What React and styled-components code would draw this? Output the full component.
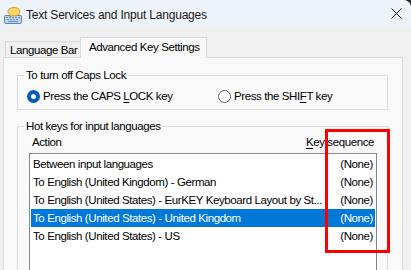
import styled, { createGlobalStyle } from "styled-components"

const GlobalStyle = createGlobalStyle`
  html, body {
    margin: 0;
    background: #2b2b2b;
  }
  body {
    font-family: "Liberation Sans", Arial, sans-serif;
    font-size: 11.5px;
    letter-spacing: -0.4px;
    color: #000;
  }
  * { box-sizing: border-box; }
`

const rows = [
    { action: "Between input languages", keys: "(None)" },
    { action: "To English (United Kingdom) - German", keys: "(None)" },
    { action: "To English (United States) - EurKEY Keyboard Layout by St...", keys: "(None)" },
    { action: "To English (United States) - United Kingdom", keys: "(None)", selected: true },
    { action: "To English (United States) - US", keys: "(None)" },
]

const AppIcon = () => (
    <svg width="18" height="18" viewBox="0 0 18 18">
        <rect x="0.5" y="9.5" width="17" height="8" rx="1" fill="#b9d4ee" stroke="#5d83b0" />
        <g fill="#6f8fb8">
            <rect x="2" y="11" width="2" height="1" />
            <rect x="5" y="11" width="2" height="1" />
            <rect x="8" y="11" width="2" height="1" />
            <rect x="11" y="11" width="2" height="1" />
            <rect x="14" y="11" width="2" height="1" />
            <rect x="3" y="13" width="2" height="1" />
            <rect x="6" y="13" width="2" height="1" />
            <rect x="9" y="13" width="2" height="1" />
            <rect x="12" y="13" width="2" height="1" />
            <rect x="4" y="15" width="10" height="1" />
        </g>
        <path d="M10 1.5c3.3 0 6 1.8 6 4.2s-2.7 4.2-6 4.2c-0.6 0-1.2 0-1.7-0.2L5.5 11l0.9-2.3C5 8 4 6.9 4 5.7 4 3.3 6.7 1.5 10 1.5z" fill="#fad66a" stroke="#d89a2a" />
    </svg>
)

const CloseIcon = () => (
    <svg width="11" height="11" viewBox="0 0 11 11">
        <path d="M0.5 0.5L10.5 10.5M10.5 0.5L0.5 10.5" stroke="#1b1b1b" strokeWidth="1" />
    </svg>
)

const App = () => {
    return (
        <>
            <GlobalStyle />
            <Window>
                <TitleBar>
                    <AppIcon />
                    <Title>Text Services and Input Languages</Title>
                    <CloseButton><CloseIcon /></CloseButton>
                </TitleBar>
                <TabStrip>
                    <Tab>Language Bar</Tab>
                    <Tab $active>Advanced Key Settings</Tab>
                </TabStrip>
                <Panel>
                    <GroupBox>
                        <Legend>To turn off Caps Lock</Legend>
                        <RadioRow>
                            <RadioItem>
                                <Radio $checked />
                                <span>Press the CAPS <Mnemonic>L</Mnemonic>OCK key</span>
                            </RadioItem>
                            <RadioItem>
                                <Radio />
                                <span>Press the SHI<Mnemonic>F</Mnemonic>T key</span>
                            </RadioItem>
                        </RadioRow>
                    </GroupBox>
                    <GroupBox $grow>
                        <Legend>Hot keys for input languages</Legend>
                        <ColumnHeader>
                            <span>Action</span>
                            <span><Mnemonic>K</Mnemonic>ey sequence</span>
                        </ColumnHeader>
                        <ListBox>
                            {rows.map((row) => (
                                <ListRow key={row.action} $selected={row.selected}>
                                    <ActionText>{row.action}</ActionText>
                                    <span>{row.keys}</span>
                                </ListRow>
                            ))}
                        </ListBox>
                    </GroupBox>
                </Panel>
                <Highlight />
            </Window>
        </>
    )
}

export default App

const Window = styled.div`
    position: relative;
    width: 411px;
    height: 270px;
    display: flex;
    flex-direction: column;
    background: #f0f0f0;
    border-top-right-radius: 8px;
    overflow: hidden;
`

const TitleBar = styled.div`
    height: 28px;
    flex: none;
    display: flex;
    align-items: center;
    padding: 2px 9px 0 4px;
    background: #eef3f9;
`

const Title = styled.div`
    margin-left: 4px;
    flex: 1;
    font-size: 12px;
    letter-spacing: -0.2px;
    color: #1a1a1a;
`

const CloseButton = styled.div`
    display: flex;
    margin-top: -3px;
`

const TabStrip = styled.div`
    flex: none;
    display: flex;
    align-items: flex-end;
    padding: 9px 0 0 5px;
    position: relative;
    z-index: 1;
`

const Tab = styled.div`
    height: ${(p) => (p.$active ? "21px" : "16px")};
    width: ${(p) => (p.$active ? "127px" : "76px")};
    margin-bottom: ${(p) => (p.$active ? "-1px" : "0")};
    margin-left: ${(p) => (p.$active ? "-1px" : "0")};
    padding: ${(p) => (p.$active ? "2px 0 0 8px" : "1px 0 0 4px")};
    border: 1px solid #d9d9d9;
    border-bottom: none;
    background: ${(p) => (p.$active ? "#f9f9f9" : "#f0f0f0")};
    white-space: nowrap;
    line-height: 15px;
`

const Panel = styled.div`
    flex: 1;
    display: flex;
    flex-direction: column;
    margin-left: 3px;
    width: 400px;
    padding: 9px 14px 0 13px;
    border: 1px solid #d9d9d9;
    background: #f9f9f9;
`

const GroupBox = styled.fieldset`
    margin: 0 0 8px 0;
    padding: 0 0 5px 0;
    border: 1px solid #dcdcdc;
    min-width: 0;
    ${(p) => p.$grow && "flex: 1; margin-bottom: 0;"}
`

const Legend = styled.legend`
    margin-left: 6px;
    padding: 0 2px;
    line-height: 16px;
`

const RadioRow = styled.div`
    display: grid;
    grid-template-columns: 191px 1fr;
    margin-top: 5px;
    padding-left: 9px;
    height: 16px;
`

const RadioItem = styled.div`
    display: flex;
    align-items: center;
    gap: 3px;
    white-space: nowrap;
`

const Radio = styled.span`
    width: 13px;
    height: 13px;
    border-radius: 50%;
    flex: none;
    background: #fff;
    border: ${(p) => (p.$checked ? "4px solid #005fb8" : "1px solid #5f5f5f")};
`

const Mnemonic = styled.span`
    text-decoration: underline;
    text-underline-offset: 2px;
`

const ColumnHeader = styled.div`
    display: flex;
    justify-content: space-between;
    height: 16px;
    line-height: 16px;
    padding: 0 13px 0 14px;
`

const ListBox = styled.div`
    margin: 3px 10px 0 11px;
    height: 130px;
    padding: 1px;
    border: 1px solid #828790;
    background: #fff;
`

const ListRow = styled.div`
    height: 18px;
    line-height: 18px;
    display: flex;
    justify-content: space-between;
    padding: 0 2px;
    background: ${(p) => (p.$selected ? "#0078d7" : "transparent")};
    color: ${(p) => (p.$selected ? "#fff" : "#000")};
`

const ActionText = styled.span`
    white-space: nowrap;
`

const Highlight = styled.div`
    position: absolute;
    left: 325px;
    top: 129px;
    width: 65px;
    height: 124px;
    border: 3px solid #ff0000;
`
